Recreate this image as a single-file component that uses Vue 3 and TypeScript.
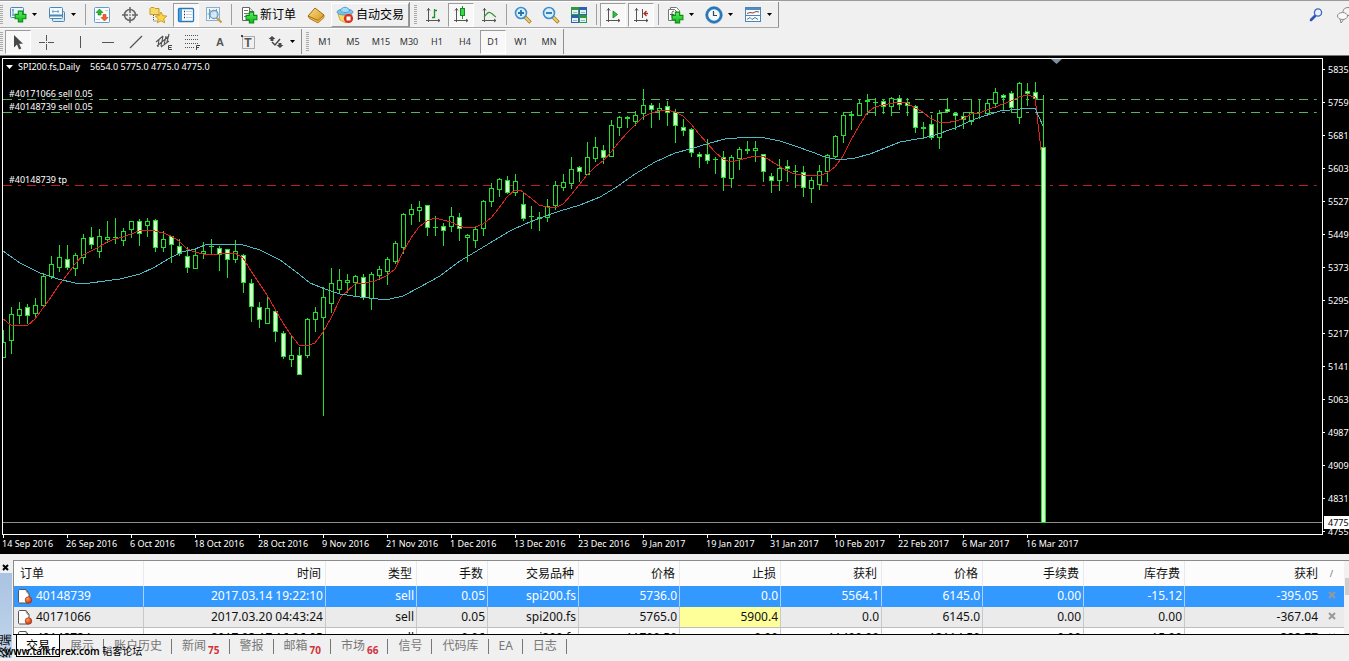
<script setup lang="ts">
type Kind = 'button' | 'drop' | 'sep' | 'grip' | 'end' | 'gap' | 'text'
interface Tool {
  kind: Kind
  icon?: string
  name?: string
  label?: string
  pressed?: boolean
}

const b = (icon: string, name: string, pressed = false): Tool => ({ kind: 'button', icon, name, pressed })
const d = (icon: string, name: string): Tool => ({ kind: 'drop', icon, name })
const t = (label: string, pressed = false): Tool => ({ kind: 'button', label, name: label, pressed })
const sep: Tool = { kind: 'sep' }
const grip: Tool = { kind: 'grip' }
const end: Tool = { kind: 'end' }

const mainTools: Tool[] = [
  grip,
  d('new-chart', 'New chart'),
  d('profiles', 'Profiles'),
  sep,
  b('market', 'Market watch'),
  b('target', 'Data window'),
  b('navigator', 'Navigator'),
  b('terminal', 'Terminal', true),
  b('tester', 'Strategy tester'),
  sep,
  { kind: 'text', icon: 'order', label: '新订单' },
  b('book', 'Editor'),
  { kind: 'text', icon: 'auto', label: '自动交易', pressed: true },
  end,
  grip,
  b('bars', 'Bar chart'),
  b('candles', 'Candlesticks', true),
  b('line', 'Line chart'),
  sep,
  b('zoom-in', 'Zoom in'),
  b('zoom-out', 'Zoom out'),
  b('tile', 'Tile windows'),
  sep,
  b('scroll', 'Auto scroll', true),
  b('shift', 'Chart shift', true),
  sep,
  d('indicators', 'Indicators'),
  d('clock', 'Periods'),
  d('template', 'Templates'),
  end,
]

const drawTools: Tool[] = [
  grip,
  b('cursor', 'Cursor', true),
  b('cross', 'Crosshair'),
  { kind: 'gap' },
  b('vline', 'Vertical line'),
  b('hline', 'Horizontal line'),
  b('trend', 'Trendline'),
  b('channel', 'Channel'),
  b('fibo', 'Fibonacci'),
  b('text', 'Text'),
  b('label', 'Text label'),
  d('arrows', 'Arrows'),
  end,
  grip,
  t('M1'),
  t('M5'),
  t('M15'),
  t('M30'),
  t('H1'),
  t('H4'),
  t('D1', true),
  t('W1'),
  t('MN'),
  end,
]

/* high, body top, body bottom, low, filled */
type Candle = [number, number, number, number, 0 | 1]
const candles: Candle[] = [
  [330, 342, 357, 357, 0], [307, 314, 340, 353, 0], [302, 309, 315, 323, 0], [304, 307, 315, 323, 1],
  [298, 305, 313, 317, 0], [273, 276, 305, 305, 0], [256, 264, 276, 278, 0], [245, 257, 267, 271, 0],
  [245, 259, 267, 269, 1], [253, 255, 268, 275, 0], [234, 238, 257, 263, 0], [227, 237, 244, 248, 1],
  [229, 236, 251, 257, 0], [221, 237, 239, 242, 0], [218, 237, 237, 243, 1], [228, 231, 240, 245, 0],
  [221, 221, 229, 237, 0], [219, 221, 233, 245, 1], [218, 221, 225, 236, 0], [219, 220, 247, 251, 1],
  [231, 239, 247, 251, 0], [236, 236, 244, 262, 1], [239, 246, 253, 255, 1], [247, 256, 267, 272, 1],
  [249, 255, 268, 268, 0], [242, 251, 253, 258, 0], [239, 246, 246, 254, 1], [246, 248, 254, 270, 1],
  [249, 249, 259, 277, 1], [240, 251, 259, 262, 0], [254, 255, 282, 292, 1], [279, 283, 306, 321, 1],
  [302, 307, 319, 327, 1], [296, 308, 323, 323, 0], [309, 311, 331, 341, 1], [331, 333, 356, 358, 1],
  [335, 355, 359, 366, 0], [347, 355, 374, 374, 1], [318, 319, 355, 357, 0], [307, 312, 319, 331, 0],
  [287, 297, 317, 415, 0], [268, 283, 303, 312, 0], [269, 280, 289, 293, 0], [274, 280, 282, 292, 0],
  [275, 276, 282, 295, 0], [274, 277, 297, 299, 1], [272, 274, 298, 309, 0], [266, 269, 275, 279, 0],
  [257, 259, 271, 284, 0], [241, 243, 261, 263, 0], [213, 214, 247, 253, 0], [204, 209, 214, 224, 0],
  [201, 207, 210, 221, 0], [205, 205, 227, 235, 1], [216, 227, 227, 235, 1], [223, 226, 230, 245, 1],
  [207, 216, 226, 231, 0], [213, 217, 228, 240, 1], [234, 235, 237, 261, 0], [227, 229, 240, 247, 0],
  [200, 201, 228, 235, 0], [183, 188, 201, 206, 0], [178, 179, 189, 196, 0], [176, 180, 192, 193, 1],
  [174, 181, 192, 195, 0], [192, 204, 218, 220, 1], [206, 216, 216, 228, 1], [212, 217, 218, 230, 1],
  [199, 206, 217, 221, 0], [181, 185, 205, 209, 0], [174, 182, 187, 190, 0], [157, 169, 183, 188, 0],
  [166, 167, 171, 181, 1], [142, 157, 174, 174, 0], [137, 147, 158, 161, 0], [145, 150, 157, 163, 1],
  [120, 125, 156, 156, 0], [116, 117, 127, 135, 0], [116, 117, 118, 127, 1], [111, 115, 121, 125, 0],
  [89, 105, 113, 119, 0], [103, 105, 109, 127, 1], [103, 108, 110, 119, 0], [101, 106, 112, 125, 1],
  [109, 112, 125, 142, 1], [119, 127, 130, 135, 1], [128, 129, 152, 156, 1], [152, 154, 156, 167, 1],
  [139, 154, 160, 163, 1], [157, 159, 159, 173, 1], [151, 157, 177, 190, 1], [155, 157, 178, 187, 0],
  [147, 149, 158, 169, 0], [141, 149, 150, 153, 1], [141, 148, 150, 161, 0], [154, 154, 171, 181, 1],
  [173, 176, 180, 192, 1], [159, 168, 180, 190, 0], [160, 166, 168, 181, 1], [165, 171, 171, 187, 1],
  [166, 172, 187, 196, 1], [177, 180, 188, 202, 0], [165, 171, 184, 189, 0], [154, 155, 171, 181, 0],
  [135, 136, 156, 157, 0], [112, 115, 135, 142, 0], [111, 114, 115, 129, 1], [100, 103, 115, 115, 0],
  [94, 100, 101, 114, 1], [98, 102, 102, 115, 1], [100, 101, 106, 113, 1], [97, 98, 106, 115, 0],
  [95, 98, 104, 109, 1], [98, 102, 105, 115, 1], [105, 106, 127, 132, 1], [122, 127, 128, 138, 1],
  [115, 124, 137, 139, 1], [110, 113, 137, 148, 0], [98, 109, 111, 112, 1], [112, 113, 115, 129, 1],
  [113, 116, 119, 128, 1], [99, 112, 121, 124, 0], [99, 112, 112, 118, 1], [99, 103, 113, 115, 0],
  [88, 92, 103, 107, 0], [94, 95, 97, 109, 1], [91, 93, 107, 111, 1], [82, 83, 117, 123, 0],
  [83, 91, 93, 105, 1], [82, 92, 98, 100, 1], [95, 147, 522, 522, 1],
]
const cx = (i: number): number => 3 + i * 8

const fastAverage =
  '3,319 11,325 19,325 27,326 35,319 43,308 51,297 59,285 67,275 75,264 83,255 91,251 99,247 107,242 115,239 123,237 131,234 139,231 147,230 155,231 163,233 171,236 179,241 187,249 195,252 203,254 219,254 235,253 243,258 251,271 259,283 267,295 275,309 283,323 291,335 299,345 307,346 315,343 323,332 331,318 341,297 355,284 365,283 375,281 386,276 395,269 403,252 411,238 419,227 427,221 435,218 443,220 451,222 459,226 467,228 475,227 483,224 491,218 499,208 507,197 515,190 520,190 531,198 539,205 547,207 555,208 563,204 571,195 579,185 587,175 595,167 603,161 611,152 619,142 627,133 635,125 643,117 651,113 659,111 667,110 675,112 683,116 691,124 699,134 707,143 715,152 723,159 731,162 739,160 747,158 755,156 763,156 771,161 779,166 787,171 795,174 803,175 819,176 827,173 835,167 843,156 851,140 859,126 867,113 875,107 883,105 899,102 907,103 915,108 923,112 931,119 939,122 946,123 955,121 963,119 971,114 979,113 987,110 995,107 1003,104 1011,101 1019,97 1027,95 1035,97 1041,150'
const slowAverage =
  '3,251 20,263 40,273 58,279 75,283 90,283 120,279 140,274 155,267 170,258 182,252 195,249 205,245 217,244 240,244 260,250 280,260 295,271 310,283 325,289 340,294 360,297 378,299 390,299 403,296 420,287 440,276 460,261 475,252 490,243 510,231 525,224 540,218 560,211 580,205 600,197 615,188 635,174 655,162 675,153 690,149 710,143 725,139 750,137 765,138 780,141 795,146 812,152 825,157 840,160 855,158 870,154 885,148 900,142 923,138 935,135 955,128 975,119 1000,111 1020,109 1035,108 1043,126'

const dates: string[] = [
  '14 Sep 2016', '26 Sep 2016', '6 Oct 2016', '18 Oct 2016', '28 Oct 2016', '9 Nov 2016',
  '21 Nov 2016', '1 Dec 2016', '13 Dec 2016', '23 Dec 2016', '9 Jan 2017', '19 Jan 2017',
  '31 Jan 2017', '10 Feb 2017', '22 Feb 2017', '6 Mar 2017', '16 Mar 2017',
]
const prices: number[] = [5835, 5759, 5681, 5603, 5527, 5449, 5373, 5295, 5217, 5141, 5063, 4987, 4909, 4831]

const levels = [
  { y: 99, text: '#40171066 sell 0.05', cls: 'open' },
  { y: 112, text: '#40148739 sell 0.05', cls: 'open' },
  { y: 185, text: '#40148739 tp', cls: 'profit' },
]

const columns: string[] = ['订单', '时间', '类型', '手数', '交易品种', '价格', '止损', '获利', '价格', '手续费', '库存费', '获利']
const orders: string[][] = [
  ['40148739', '2017.03.14 19:22:10', 'sell', '0.05', 'spi200.fs', '5736.0', '0.0', '5564.1', '6145.0', '0.00', '-15.12', '-395.05'],
  ['40171066', '2017.03.20 04:43:24', 'sell', '0.05', 'spi200.fs', '5765.0', '5900.4', '0.0', '6145.0', '0.00', '0.00', '-367.04'],
  ['40148734', '2017.03.17 16:06:05', 'sell', '0.06', 'spi200.fs', '11700.50', '0.00', '11400.00', '12114.50', '0.00', '-15.00', '-388.77'],
]

const tabs: { label: string; count?: number }[] = [
  { label: '交易' }, { label: '展示' }, { label: '账户历史' }, { label: '新闻', count: 75 }, { label: '警报' },
  { label: '邮箱', count: 70 }, { label: '市场', count: 66 }, { label: '信号' }, { label: '代码库' },
  { label: 'EA' }, { label: '日志' },
]
</script>

<template>
  <div class="app">
    <svg class="defs" aria-hidden="true">
      <defs>
        <linearGradient id="gPlus" x1="0" y1="0" x2="0" y2="1">
          <stop offset="0" stop-color="#5cf05c" />
          <stop offset="1" stop-color="#0eb81c" />
        </linearGradient>
        <linearGradient id="gGold" x1="0" y1="0" x2="1" y2="1">
          <stop offset="0" stop-color="#fbe08a" />
          <stop offset="1" stop-color="#d5961c" />
        </linearGradient>
        <radialGradient id="gBall" cx="0.35" cy="0.3" r="0.8">
          <stop offset="0" stop-color="#ff9a5a" />
          <stop offset="1" stop-color="#c42a08" />
        </radialGradient>
        <symbol id="plus" viewBox="0 0 12 12">
          <path d="M4 1h4v3h3v4H8v3H4V8H1V4h3z" fill="url(#gPlus)" stroke="#0b8a16" />
        </symbol>
        <symbol id="i-new-chart" viewBox="0 0 18 18">
          <rect x="1.500" y="1.500" width="13" height="10" rx="1" fill="#e9f4fc" stroke="#4b86b4" />
          <path d="M4 3v7M3 9h10M3 4h2" stroke="#5c90b8" fill="none" />
          <use href="#plus" x="5" y="4" width="13" height="13" />
        </symbol>
        <symbol id="i-profiles" viewBox="0 0 18 18">
          <rect x="4.500" y="5.500" width="12" height="10" rx="1" fill="#d7e9f7" stroke="#4b86b4" />
          <rect x="1.500" y="1.500" width="13" height="11" rx="1" fill="#f2f9ff" stroke="#4b86b4" />
          <path d="M2 9.500h12" stroke="#4b86b4" stroke-width="2" />
          <path d="M4 5.500h7M5 4v3M10 4v3" stroke="#7ba6c8" fill="none" />
        </symbol>
        <symbol id="i-market" viewBox="0 0 18 18">
          <rect x="1.500" y="1.500" width="15" height="15" rx="1" fill="#fbfdff" stroke="#5f9fd0" />
          <path d="M3 13.500h4M12 4.500h3" stroke="#b9cfe0" />
          <path d="M6.500 3L10 6.500H8V9H5V6.500H3z" fill="#2fb52f" stroke="#178017" stroke-width="0.600" />
          <path d="M11.500 15L8 11.500h2V8.500h3v3h2z" fill="#f2622e" stroke="#c23a10" stroke-width="0.600" />
        </symbol>
        <symbol id="i-target" viewBox="0 0 18 18">
          <circle cx="9" cy="9" r="5.500" fill="#ececec" stroke="#666" stroke-width="1.500" />
          <path d="M9 1v6M9 11v6M1 9h6M11 9h6" stroke="#666" stroke-width="1.500" />
          <path d="M8 9h2" stroke="#666" />
        </symbol>
        <symbol id="i-navigator" viewBox="0 0 18 18">
          <path d="M1 2.500l1-1h3l1 1h4v6H1z" fill="#f8da6b" stroke="#c99a23" />
          <path d="M4.500 9v6M4.500 15h3" stroke="#555" stroke-dasharray="1 1" />
          <path d="M12 6l1.800 3.600 4 .5-3 2.700.8 4-3.600-2-3.600 2 .8-4-3-2.700 4-.5z" fill="#f8d648" stroke="#c28d12" stroke-width="0.800" />
        </symbol>
        <symbol id="i-terminal" viewBox="0 0 18 18">
          <rect x="1.500" y="2.500" width="15" height="13" rx="1" fill="#fff" stroke="#2a78b8" stroke-width="1.300" />
          <path d="M2 3h3v12H2z" fill="#4aa0dc" />
          <path d="M7 5.500h1M7 8.500h1M7 11.500h1" stroke="#333" stroke-width="1.300" />
          <path d="M9 5.500h6M9 8.500h6M9 11.500h6" stroke="#b6d3ea" />
        </symbol>
        <symbol id="i-tester" viewBox="0 0 18 18">
          <rect x="1.500" y="1.500" width="13" height="13" fill="#eef5fb" stroke="#8ab0cc" />
          <path d="M4.500 3v10M4 5h2M11.500 3v10M2.500 8h3M8 4v5" stroke="#6b9abf" />
          <circle cx="9" cy="8.500" r="4" fill="#d4e9f8" fill-opacity="0.800" stroke="#6c9cc0" stroke-width="1.300" />
          <path d="M12 12l4.500 4.500" stroke="#caa04a" stroke-width="2.400" />
        </symbol>
        <symbol id="i-order" viewBox="0 0 18 18">
          <path d="M2.500 1.500h7l4 4v9h-11z" fill="#fff" stroke="#666" />
          <path d="M9.500 1.500v4h4" fill="#ddd" stroke="#666" />
          <path d="M4 4.500h4M4 7.500h7M4 10.500h5" stroke="#777" />
          <use href="#plus" x="5" y="5" width="13" height="13" />
        </symbol>
        <symbol id="i-book" viewBox="0 0 18 18">
          <path d="M1 10L8 2l9 7-6 6z" fill="url(#gGold)" stroke="#a26a10" />
          <path d="M1 10l1.500 2.500L11 17l6-5.500V9l-6 5.500z" fill="#e9b850" stroke="#a26a10" stroke-width="0.800" />
        </symbol>
        <symbol id="i-auto" viewBox="0 0 18 18">
          <path d="M2 8l2 6 6 3 6-9z" fill="#f6d75f" stroke="#d9ad35" />
          <ellipse cx="9" cy="6" rx="8" ry="3" fill="#7cc4ec" stroke="#4d9fd0" />
          <path d="M4.500 5c1-5 8-5 9 0-2 2-7 2-9 0z" fill="#a5dcf7" stroke="#4d9fd0" />
          <circle cx="12.500" cy="12.500" r="4.600" fill="#df2c1c" />
          <rect x="10.500" y="10.500" width="4" height="4" fill="#fff" />
        </symbol>
        <symbol id="axes" viewBox="0 0 18 18">
          <path d="M4.500 2v14M2 14.500h14M3 4.500l1.500-2 1.500 2M14 13l2 1.500-2 1.500" fill="none" stroke="#555" />
        </symbol>
        <symbol id="i-bars" viewBox="0 0 18 18">
          <use href="#axes" />
          <path d="M10.500 3v9M8 11.500h2.500M10.500 4.500H13" fill="none" stroke="#1f8d2e" stroke-width="1.300" />
        </symbol>
        <symbol id="i-candles" viewBox="0 0 18 18">
          <use href="#axes" />
          <path d="M10.500 0v13" stroke="#1f8d2e" />
          <rect x="8.500" y="2.500" width="4" height="7" fill="#35d848" stroke="#158a24" />
        </symbol>
        <symbol id="i-line" viewBox="0 0 18 18">
          <use href="#axes" />
          <path d="M4 11c3-3 4-6 7-4 2 1 3 3 5 4" fill="none" stroke="#2f9a3c" stroke-width="1.200" />
        </symbol>
        <symbol id="lens" viewBox="0 0 18 18">
          <path d="M11 11l5.500 5.500" stroke="#9b7420" stroke-width="3.400" />
          <path d="M11 11l5 5" stroke="#f0cf60" stroke-width="2" />
          <circle cx="7" cy="7" r="5.500" fill="#d8effd" stroke="#3f8fca" stroke-width="1.600" />
        </symbol>
        <symbol id="i-zoom-in" viewBox="0 0 18 18">
          <use href="#lens" />
          <path d="M4 7h6M7 4v6" stroke="#2773ae" stroke-width="1.800" />
        </symbol>
        <symbol id="i-zoom-out" viewBox="0 0 18 18">
          <use href="#lens" />
          <path d="M4 7h6" stroke="#2773ae" stroke-width="1.800" />
        </symbol>
        <symbol id="i-tile" viewBox="0 0 18 18">
          <rect x="1" y="1" width="8" height="8" fill="#2f9a3c" />
          <rect x="9" y="1" width="8" height="8" fill="#2e62b0" />
          <rect x="1" y="9" width="8" height="8" fill="#2e62b0" />
          <rect x="9" y="9" width="8" height="8" fill="#2f9a3c" />
          <path d="M2 4h6v4H2zM10 4h6v4h-6zM2 12h6v4H2zM10 12h6v4h-6z" fill="#e6f1f6" />
          <path d="M3 6.500h4M11 6.500h4M3 14.500h4M11 14.500h4" stroke="#8bbac8" />
        </symbol>
        <symbol id="i-scroll" viewBox="0 0 18 18">
          <use href="#axes" />
          <path d="M9 5l4.500 3.500L9 12z" fill="#2ec43e" stroke="#16822a" stroke-width="0.800" />
        </symbol>
        <symbol id="i-shift" viewBox="0 0 18 18">
          <use href="#axes" />
          <path d="M10.500 3v9" stroke="#555" />
          <path d="M16 7.500h-4M14.500 5L12 7.500l2.500 2.500" fill="none" stroke="#a8322a" stroke-width="1.300" />
        </symbol>
        <symbol id="i-indicators" viewBox="0 0 18 18">
          <path d="M4.500 1.500h6l3 3v8h-9z" fill="#fff" stroke="#777" />
          <path d="M2.500 3.500h6l3 3v8h-9z" fill="#fff" stroke="#777" />
          <path d="M8 5.500c-2-1-2 1-2 3v3M4 8.500h4" fill="none" stroke="#555" />
          <use href="#plus" x="5" y="5" width="13" height="13" />
        </symbol>
        <symbol id="i-clock" viewBox="0 0 18 18">
          <circle cx="9" cy="9" r="7" fill="#f1f8fe" stroke="#2778bd" stroke-width="2.400" />
          <circle cx="9" cy="9" r="8.300" fill="none" stroke="#1d5f9d" stroke-width="0.600" />
          <path d="M8.500 5v4.500H12" fill="none" stroke="#444" stroke-width="1.200" />
        </symbol>
        <symbol id="i-template" viewBox="0 0 18 18">
          <rect x="1.500" y="1.500" width="15" height="14" fill="#f9fcff" stroke="#4b86b4" />
          <path d="M2 3h14" stroke="#4b8fc8" stroke-width="2" />
          <path d="M2 9.500h14" stroke="#4b86b4" />
          <path d="M3 7.500l3-1 3 .5 3-1.500 3 .5" fill="none" stroke="#a23b2e" />
          <path d="M3 13.500l3-2 2 2 3-2 3 2" fill="none" stroke="#3f7d9b" />
        </symbol>
        <symbol id="i-cursor" viewBox="0 0 18 18">
          <path d="M5 2v12.500l3-3 2 5 2.300-1-2.200-4.700H14z" fill="#484848" />
        </symbol>
        <symbol id="i-cross" viewBox="0 0 18 18">
          <path d="M9.500 2v6M9.500 11v6M2 9.500h6M11 9.500h6" stroke="#555" />
          <path d="M9 9.500h1" stroke="#555" />
        </symbol>
        <symbol id="i-vline" viewBox="0 0 18 18"><path d="M9.500 3v12" stroke="#555" /></symbol>
        <symbol id="i-hline" viewBox="0 0 18 18"><path d="M3 9.500h12" stroke="#555" /></symbol>
        <symbol id="i-trend" viewBox="0 0 18 18"><path d="M3 15L15 3" stroke="#555" stroke-width="1.200" /></symbol>
        <symbol id="i-channel" viewBox="0 0 18 18">
          <path d="M1 9l7-6M2 13L14 3M6 14l8-6M4 6l-1 8M8 3L6 13M11 3L9 12M14 1l-2 8" stroke="#555" stroke-width="1.100" />
          <path d="M17 12.500h-3.500v4H17M13.500 14.500h3" fill="none" stroke="#444" />
        </symbol>
        <symbol id="i-fibo" viewBox="0 0 18 18">
          <path d="M2 2.500h14M2 6.500h14M2 10.500h14M2 14.500h9" stroke="#555" stroke-dasharray="1 1" />
          <path d="M13.500 17v-4.500H17M13.500 14.500H16" fill="none" stroke="#444" />
        </symbol>
        <symbol id="i-text" viewBox="0 0 18 18">
          <text x="9" y="13" text-anchor="middle" font-family="Liberation Sans, sans-serif" font-size="11" font-weight="bold" fill="#555">A</text>
        </symbol>
        <symbol id="i-label" viewBox="0 0 18 18">
          <rect x="3.500" y="3.500" width="12" height="12" fill="none" stroke="#666" stroke-dasharray="1 1" />
          <path d="M2 2h2v2H2z" fill="#444" />
          <text x="9" y="14" text-anchor="middle" font-family="Liberation Sans, sans-serif" font-size="12" font-weight="bold" fill="#555">T</text>
        </symbol>
        <symbol id="i-arrows" viewBox="0 0 18 18">
          <path d="M5 3l3.500 3H6.500v2h-3V6H1.500zM13 15l-3.500-3h2v-2h3v2h2z" fill="#484848" />
          <path d="M5 9l3 3 5-6" fill="none" stroke="#484848" stroke-width="1.500" />
        </symbol>
        <symbol id="i-doc" viewBox="0 0 16 16">
          <path d="M1.500 3c0-1 .5-1.500 1.500-1.500h6l3 4V14c0 .5-.5 1-1 1H3c-1 0-1.500-.5-1.500-1z" fill="#fff" stroke="#555" />
          <path d="M9 1.500c.5 2 0 3.500 3 4" fill="none" stroke="#777" />
          <circle cx="11.500" cy="12" r="3.300" fill="url(#gBall)" stroke="#8e2d10" stroke-width="0.600" />
        </symbol>
      </defs>
    </svg>

    <header class="toolbars">
      <div v-for="(bar, r) in [mainTools, drawTools]" :key="r" class="bar">
        <div class="tools" role="toolbar">
          <template v-for="(tool, i) in bar" :key="i">
            <span v-if="tool.kind === 'grip'" class="grip"></span>
            <span v-else-if="tool.kind === 'sep'" class="sep"></span>
            <span v-else-if="tool.kind === 'gap'" class="gap"></span>
            <span v-else-if="tool.kind === 'end'" class="end"></span>
            <button v-else type="button" class="tool" :class="[tool.kind, { pressed: tool.pressed }]" :aria-label="tool.name">
              <svg v-if="tool.icon" class="icon"><use :href="'#i-' + tool.icon" /></svg>
              <span v-if="tool.label">{{ tool.label }}</span>
              <svg v-if="tool.kind === 'drop'" class="caret" viewBox="0 0 5 3"><path d="M0 0h5L2.500 3z" /></svg>
            </button>
          </template>
        </div>
        <div v-if="r === 0" class="right">
          <button type="button" class="plain" aria-label="Search">
            <svg class="icon" viewBox="0 0 18 18">
              <path d="M4 14l4-4" stroke="#2d56b5" stroke-width="2.600" stroke-linecap="round" />
              <circle cx="11" cy="6.500" r="3.600" fill="#eef4ff" stroke="#3c66c4" stroke-width="1.300" />
            </svg>
          </button>
          <button type="button" class="plain" aria-label="Chat">
            <svg class="icon" viewBox="0 0 18 18">
              <ellipse cx="12" cy="5.500" rx="5" ry="4" fill="#f4f4f4" stroke="#888" />
              <path d="M4 12l1 5 3-4z" fill="#f4f4f4" stroke="#888" />
              <ellipse cx="6.500" cy="10" rx="5" ry="3.500" fill="#fafafa" stroke="#888" />
            </svg>
          </button>
        </div>
      </div>
    </header>

    <main class="chart">
      <svg class="plot" role="img" aria-label="SPI200.fs, Daily">
        <defs>
          <clipPath id="plotClip"><rect x="3" y="3" width="3000" height="475" /></clipPath>
        </defs>
        <g clip-path="url(#plotClip)">
          <g transform="translate(0 -56)">
            <svg x="0" y="0" width="100%" height="600" class="levels">
              <line v-for="l in levels" :key="l.y" :class="l.cls" x1="3" x2="99.600%" :y1="l.y + 0.5" :y2="l.y + 0.5" />
            </svg>
            <line class="bid" x1="3" x2="100%" y1="522.500" y2="522.500" />
            <g v-for="(c, i) in candles" :key="i" class="candle">
              <rect :x="cx(i)" :y="c[0]" width="1" :height="c[3] - c[0] + 1" />
              <template v-if="c[2] - c[1] > 1">
                <rect :x="cx(i) - 2" :y="c[1]" width="5" :height="c[2] - c[1] + 1" />
                <rect :class="c[4] ? 'full' : 'hollow'" :x="cx(i) - 1" :y="c[1] + 1" width="3" :height="c[2] - c[1] - 1" />
              </template>
              <rect v-else :x="cx(i) - 2" :y="c[1]" width="5" :height="c[2] - c[1] + 1" />
            </g>
            <polyline class="fast" :points="fastAverage" />
            <polyline class="slow" :points="slowAverage" />
          </g>
        </g>
        <path class="shift-mark" d="M1051 3h11l-5.500 5z" />
        <path class="menu-mark" d="M6 9h7l-3.500 4z" />
        <text x="18" y="14">SPI200.fs,Daily</text>
        <text x="90" y="14">5654.0 5775.0 4775.0 4775.0</text>
        <text v-for="l in levels" :key="l.text" x="9" :y="l.y - 58">{{ l.text }}</text>
        <g class="frame">
          <rect x="2" y="2" width="100%" height="1" />
          <rect x="2" y="478" width="100%" height="1" />
          <rect x="2" y="2" width="1" height="477" />
          <rect v-for="(day, i) in dates" :key="day" :x="3 + i * 64" y="479" width="1" height="3" />
        </g>
        <text v-for="(day, i) in dates" :key="day" :x="2 + i * 64" y="491">{{ day }}</text>
      </svg>
      <svg class="scale" role="img" aria-label="Price scale">
        <rect class="edge" x="0" y="2" width="1" height="477" />
        <g v-for="(p, i) in prices" :key="p">
          <rect class="edge" x="1" :y="13 + i * 33" width="2" height="1" />
          <text x="6" :y="17 + i * 33">{{ p }}</text>
        </g>
        <rect class="edge" x="1" y="475" width="2" height="1" />
        <text x="6" y="479">4755</text>
        <rect class="edge" x="2" y="460" width="30" height="13" />
        <text class="now" x="6" y="470">4775</text>
      </svg>
    </main>

    <section class="panel">
      <div class="side">
        <button type="button" class="close" aria-label="Close">
          <svg viewBox="0 0 7 7"><path d="M1 1l5 5M6 1L1 6" /></svg>
        </button>
        <div class="title"><span>终端</span></div>
      </div>
      <div class="body">
        <div class="grid">
          <table>
            <colgroup>
              <col v-for="(c, i) in columns" :key="i" :class="'c' + i" />
              <col class="cx" />
            </colgroup>
            <thead>
              <tr>
                <th v-for="(c, i) in columns" :key="i" scope="col">{{ c }}</th>
                <th class="mark">/</th>
              </tr>
            </thead>
            <tbody>
              <tr v-for="(row, r) in orders" :key="r" :class="{ selected: r === 0, alt: r === 1 }">
                <td v-for="(v, i) in row" :key="i" :class="{ near: r === 1 && i === 6 }">
                  <svg v-if="i === 0" class="doc"><use href="#i-doc" /></svg>{{ v }}
                </td>
                <td class="mark">
                  <button type="button" class="cut" aria-label="Close order">
                    <svg viewBox="0 0 8 8"><path d="M1 1l6 6M7 1L1 7" /></svg>
                  </button>
                </td>
              </tr>
            </tbody>
          </table>
          <div class="scroll"><div class="thumb"></div></div>
        </div>
        <nav class="tabs">
          <button v-for="(tab, i) in tabs" :key="tab.label" type="button" class="tab" :class="{ active: i === 0 }">
            {{ tab.label }}<span v-if="tab.count" class="count">{{ tab.count }}</span>
          </button>
        </nav>
      </div>
      <div class="credit">www.talkforex.com <span>韬客论坛</span></div>
    </section>
  </div>
</template>

<style>
html,
body {
  margin: 0;
  background: #f0f0f0;
}
</style>

<style scoped>
.app {
  display: flex;
  flex-direction: column;
  height: 100vh;
  min-height: 661px;
  overflow: hidden;
  background: #f0f0f0;
  color: #111;
  font: 12px/16px 'Noto Sans', 'Noto Sans CJK SC', sans-serif;
}
.defs {
  position: absolute;
  width: 0;
  height: 0;
}
button {
  margin: 0;
  padding: 0;
  border: 0;
  background: none;
  color: inherit;
  font: inherit;
}

/* toolbars */
.toolbars {
  flex: none;
  border-top: 1px solid #9a9a9a;
}
.bar {
  display: flex;
  justify-content: space-between;
  height: 27px;
}
.tools {
  display: flex;
  align-items: center;
  box-sizing: border-box;
  height: 27px;
  border-top: 1px solid #fff;
  border-bottom: 1px solid #a8a8a8;
}
.bar + .bar .tools {
  border-bottom-color: #f0f0f0;
}
.grip {
  width: 3px;
  height: 20px;
  margin-right: 1px;
  background: repeating-linear-gradient(#aaa 0 1px, #f0f0f0 1px 2px);
}
.grip:not(:first-child) {
  margin: 0 2px 0 4px;
}
.sep {
  width: 1px;
  height: 21px;
  margin: 0 2px 0 3px;
  background: #a0a0a0;
}
.gap {
  width: 6px;
}
.end {
  width: 1px;
  height: 25px;
  background: #8f8f8f;
}
.tool {
  display: flex;
  align-items: center;
  justify-content: center;
  box-sizing: border-box;
  width: 28px;
  height: 24px;
  border: 1px solid transparent;
  color: #333;
  font-size: 9px;
}
.tool.drop {
  justify-content: flex-start;
  gap: 5px;
  width: 39px;
  padding-left: 4px;
}
.tool.text {
  gap: 2px;
  width: 68px;
  color: #000;
  font-size: 12px;
}
.tool.pressed {
  width: 26px;
  margin: 0 1px;
  border-color: #9c9c9c #fff #fff #9c9c9c;
  background: #f8f8f8;
}
.tool.text.pressed {
  width: 78px;
  margin: 0 0 0 1px;
  border-color: #fff #999 #999 #fff;
  background: #f0f0f0;
}
.icon {
  flex: none;
  display: block;
  width: 18px;
  height: 18px;
}
.caret {
  width: 5px;
  height: 3px;
}
.right {
  display: flex;
  gap: 11px;
  width: 42px;
  padding-top: 5px;
  overflow: hidden;
}
.plain {
  flex: none;
  width: 18px;
  height: 18px;
}

/* chart */
.chart {
  flex: none;
  display: flex;
  height: 498px;
  border-top: 1px solid #777;
  background: #000;
}
.plot {
  flex: 1;
  min-width: 0;
  height: 498px;
}
.scale {
  flex: none;
  width: 27px;
  height: 498px;
}
.chart text {
  fill: #fff;
  font-size: 9px;
}
.chart .now {
  fill: #000;
}
.frame,
.edge,
.menu-mark {
  fill: #fff;
}
.shift-mark {
  fill: #8090a4;
}
.levels line {
  stroke: #58b45c;
  stroke-dasharray: 9 6 3 6;
}
.levels .profit {
  stroke: #c8182c;
}
.bid {
  stroke: #8a8f8a;
}
.candle rect {
  fill: #22e02c;
}
.candle .full {
  fill: #d2ffcc;
}
.candle .hollow {
  fill: #000;
}
.fast,
.slow {
  fill: none;
  stroke: #e0241c;
  shape-rendering: crispEdges;
}
.slow {
  stroke: #4fb8c4;
}

/* terminal panel */
.panel {
  position: relative;
  flex: 1;
  display: flex;
  min-height: 0;
  padding: 6px 0 3px;
}
.side {
  display: flex;
  flex-direction: column;
  width: 13px;
}
.close {
  width: 9px;
  height: 13px;
}
.close svg {
  display: block;
  width: 7px;
  height: 7px;
  margin: 1px 0 0 2px;
  fill: none;
  stroke: #000;
  stroke-width: 2;
}
.title {
  flex: 1;
  display: flex;
  align-items: flex-end;
  width: 12px;
  background: linear-gradient(#a9c3e2, #c3d6ec);
}
.title span {
  color: #000;
  font-size: 12px;
  line-height: 12px;
  writing-mode: vertical-rl;
  text-orientation: sideways;
  transform: rotate(180deg);
}
.body {
  flex: 1;
  display: flex;
  flex-direction: column;
  min-width: 0;
}
.grid {
  flex: 1;
  display: flex;
  min-height: 0;
  overflow: hidden;
  border-top: 1px solid #8c8c8c;
  border-left: 1px solid #8c8c8c;
  background: #fff;
}
table {
  flex: 1;
  width: 100%;
  height: 0;
  border-collapse: separate;
  border-spacing: 0;
  table-layout: fixed;
}
.c0 { width: 130px; }
.c1 { width: 182px; }
.c2 { width: 91px; }
.c3 { width: 71px; }
.c4 { width: 91px; }
.c5, .c6, .c7, .c8, .c9, .c10 { width: 101px; }
.cx { width: 25px; }
th,
td {
  box-sizing: border-box;
  height: 21px;
  padding: 0 2px 0 0;
  border-right: 1px solid #c9c9c9;
  border-bottom: 1px solid #bdbdbd;
  font-weight: 400;
  line-height: 20px;
  text-align: right;
  white-space: nowrap;
}
th {
  height: 25px;
  padding-right: 4px;
  border-right-color: #e6eaee;
  border-bottom: 0;
  background: #fcfcfc;
  line-height: 24px;
}
th:first-child {
  padding-left: 6px;
  text-align: left;
}
td:first-child {
  padding-left: 3px;
  text-align: left;
}
th:nth-last-child(2),
td:nth-last-child(2) {
  padding-right: 1px;
  border-right: 0;
}
.mark {
  padding: 0;
  border-right: 0;
  color: #777;
  font-size: 9px;
  text-align: center;
}
.doc {
  width: 16px;
  height: 16px;
  margin-right: 3px;
  vertical-align: -4px;
}
.selected td {
  border-bottom-color: #3399ff;
  border-right-color: #a9d2fb;
  background: #3399ff;
  color: #fff;
}
.alt td {
  background: #ebebeb;
}
.alt .near {
  background: #ffff99;
}
.cut svg {
  display: block;
  width: 8px;
  height: 8px;
  fill: none;
  stroke: #999;
  stroke-width: 2;
}
.scroll {
  width: 5px;
  padding-top: 17px;
  background: #f1f1f1;
}
.thumb {
  height: 17px;
  margin-left: 1px;
  background: #cdcdcd;
}
.tabs {
  flex: none;
  display: flex;
  box-sizing: border-box;
  height: 24px;
  padding-left: 3px;
  border-top: 1px solid #000;
}
.tab {
  position: relative;
  padding: 0 10px;
  color: #777;
  line-height: 20px;
  height: 21px;
  white-space: nowrap;
}
.tab::after {
  content: '';
  position: absolute;
  top: 4px;
  right: 0;
  width: 1px;
  height: 15px;
  background: #777;
}
.tab.active {
  border: 1px solid #000;
  border-width: 0 1px 1px;
  background: #fff;
  color: #000;
  padding: 0 9px;
  height: 22px;
}
.tab.active::after {
  content: none;
}
.count {
  position: relative;
  top: 4px;
  margin-left: 2px;
  color: #d2323c;
  font-size: 10px;
  font-weight: 700;
  line-height: 10px;
}
.credit {
  position: absolute;
  bottom: 2px;
  left: 5px;
  color: #000;
  font-size: 10px;
  font-weight: 600;
  line-height: 16px;
}
.credit span {
  font-weight: 400;
}
</style>
